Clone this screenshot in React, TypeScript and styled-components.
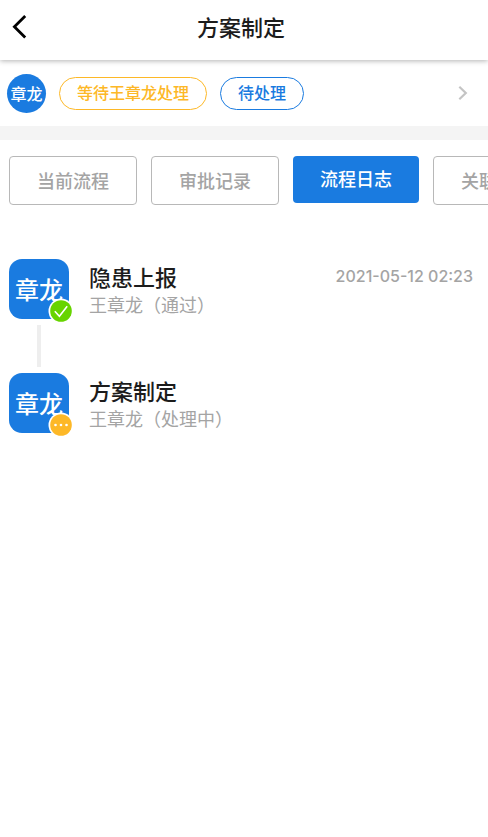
import React from 'react';
import styled, { createGlobalStyle } from 'styled-components';

const blue = '#1a7be0';
const amber = '#fdb827';
const muted = '#a4a4a4';

const GlobalStyle = createGlobalStyle`
  * { box-sizing: border-box; }
  body {
    margin: 0;
    background: #fff;
    color: #1c1c1c;
    font-family: Inter, "Noto Sans CJK SC", sans-serif;
  }
  button { font: inherit; cursor: pointer; }
  h1, h2, p { margin: 0; }
`;

const Header = styled.header`
  position: relative;
  display: grid;
  grid-template-columns: 40px 1fr 46px;
  align-items: center;
  height: 60px;
  padding-bottom: 6px;
  background: #fff;
  box-shadow: 0 1px 5px rgba(0, 0, 0, 0.3);
`;

const BackButton = styled.button`
  display: flex;
  align-items: center;
  height: 40px;
  padding: 0 0 0 12px;
  border: 0;
  background: none;
`;

const Title = styled.h1`
  padding-top: 2px;
  text-align: center;
  font-size: 22px;
  line-height: 32px;
  font-weight: 500;
`;

const StatusRow = styled.section`
  display: flex;
  align-items: center;
  height: 66px;
  padding: 0 20px 0 7px;
`;

const RoundAvatar = styled.span`
  display: flex;
  align-items: center;
  justify-content: center;
  width: 39px;
  height: 39px;
  margin-right: 13px;
  border-radius: 50%;
  background: ${blue};
  color: #fff;
  font-size: 16px;
  font-weight: 500;
`;

const Pill = styled.span<{ $color: string }>`
  margin-right: 13px;
  padding: 0 17px;
  border: 1px solid ${(p) => p.$color};
  border-radius: 17px;
  color: ${(p) => p.$color};
  font-size: 16px;
  font-weight: 500;
  line-height: 31px;
  white-space: nowrap;
`;

const MoreButton = styled.button`
  display: flex;
  margin-left: auto;
  padding: 0;
  border: 0;
  background: none;
`;

const Divider = styled.div`
  height: 14px;
  background: #f4f4f4;
`;

const Tabs = styled.nav`
  display: flex;
  align-items: flex-start;
  gap: 14px;
  padding: 16px 9px 0;
  overflow: hidden;
`;

const Tab = styled.button<{ $active?: boolean }>`
  flex: none;
  padding: ${(p) => (p.$active ? '0 27px' : '2px 27px 0')};
  border: ${(p) => (p.$active ? '0' : '1px solid #b8b8b8')};
  border-radius: 4px;
  background: ${(p) => (p.$active ? blue : '#fff')};
  color: ${(p) => (p.$active ? '#fff' : muted)};
  font-size: 18px;
  font-weight: 500;
  line-height: ${(p) => (p.$active ? '47px' : '45px')};
`;

const Log = styled.ol`
  margin: 0;
  padding: 54px 15px 24px 9px;
  list-style: none;
`;

const Entry = styled.li`
  display: grid;
  grid-template-columns: 60px 1fr auto;
  column-gap: 20px;
`;

const Avatar = styled.div`
  position: relative;
  display: flex;
  align-items: center;
  justify-content: center;
  width: 60px;
  height: 60px;
  padding-bottom: 2px;
  border-radius: 13px;
  background: ${blue};
  color: #fff;
  font-size: 24px;
  font-weight: 500;
`;

const Badge = styled.svg`
  position: absolute;
  right: -5px;
  bottom: -5px;
`;

const Connector = styled.div`
  width: 4px;
  height: 42px;
  margin: 6px auto;
  background: #eee;
`;

const EntryTitle = styled.h2`
  padding-top: 4px;
  font-size: 22px;
  line-height: 30px;
  font-weight: 500;
`;

const EntryNote = styled.p`
  color: ${muted};
  font-size: 18px;
  line-height: 26px;
`;

const Time = styled.time`
  padding-top: 6px;
  color: ${muted};
  font-size: 16px;
  font-weight: 500;
  line-height: 22px;
`;

const tabs = ['当前流程', '审批记录', '流程日志', '关联'];

const entries = [
  { title: '隐患上报', note: '王章龙（通过）', time: '2021-05-12 02:23', done: true },
  { title: '方案制定', note: '王章龙（处理中）', time: '', done: false },
];

function StatusBadge({ done }: { done: boolean }) {
  return (
    <Badge width="26" height="26" viewBox="0 0 26 26" aria-hidden="true">
      <circle cx="13" cy="13" r="12.5" fill="#fff" />
      <circle cx="13" cy="13" r="10.8" fill={done ? '#67d400' : amber} />
      {done ? (
        <path d="M6.8 13.2l4.6 5 7.8-10" fill="none" stroke="#fff" strokeWidth="1.6" />
      ) : (
        <g fill="#fff">
          <circle cx="7.5" cy="13" r="1.3" />
          <circle cx="13" cy="13" r="1.3" />
          <circle cx="18.5" cy="13" r="1.3" />
        </g>
      )}
    </Badge>
  );
}

export default function App() {
  return (
    <>
      <GlobalStyle />
      <Header>
        <BackButton aria-label="返回">
          <svg width="16" height="26" viewBox="0 0 16 26">
            <path d="M13.2 2L2.4 12.8l10.8 10.8" fill="none" stroke="#000" strokeWidth="2.8" />
          </svg>
        </BackButton>
        <Title>方案制定</Title>
      </Header>
      <main>
        <StatusRow>
          <RoundAvatar>章龙</RoundAvatar>
          <Pill $color={amber}>等待王章龙处理</Pill>
          <Pill $color={blue}>待处理</Pill>
          <MoreButton aria-label="查看详情">
            <svg width="10" height="16" viewBox="0 0 10 16">
              <path d="M1.3 1.8L7.8 8l-6.5 6.2" fill="none" stroke="#c4c4c4" strokeWidth="2.2" />
            </svg>
          </MoreButton>
        </StatusRow>
        <Divider />
        <Tabs>
          {tabs.map((label) => (
            <Tab key={label} $active={label === '流程日志'}>{label}</Tab>
          ))}
        </Tabs>
        <Log>
          {entries.map((entry, i) => (
            <Entry key={entry.title}>
              <div>
                <Avatar>
                  章龙
                  <StatusBadge done={entry.done} />
                </Avatar>
                {i < entries.length - 1 && <Connector />}
              </div>
              <div>
                <EntryTitle>{entry.title}</EntryTitle>
                <EntryNote>{entry.note}</EntryNote>
              </div>
              {entry.time && <Time>{entry.time}</Time>}
            </Entry>
          ))}
        </Log>
      </main>
    </>
  );
}
